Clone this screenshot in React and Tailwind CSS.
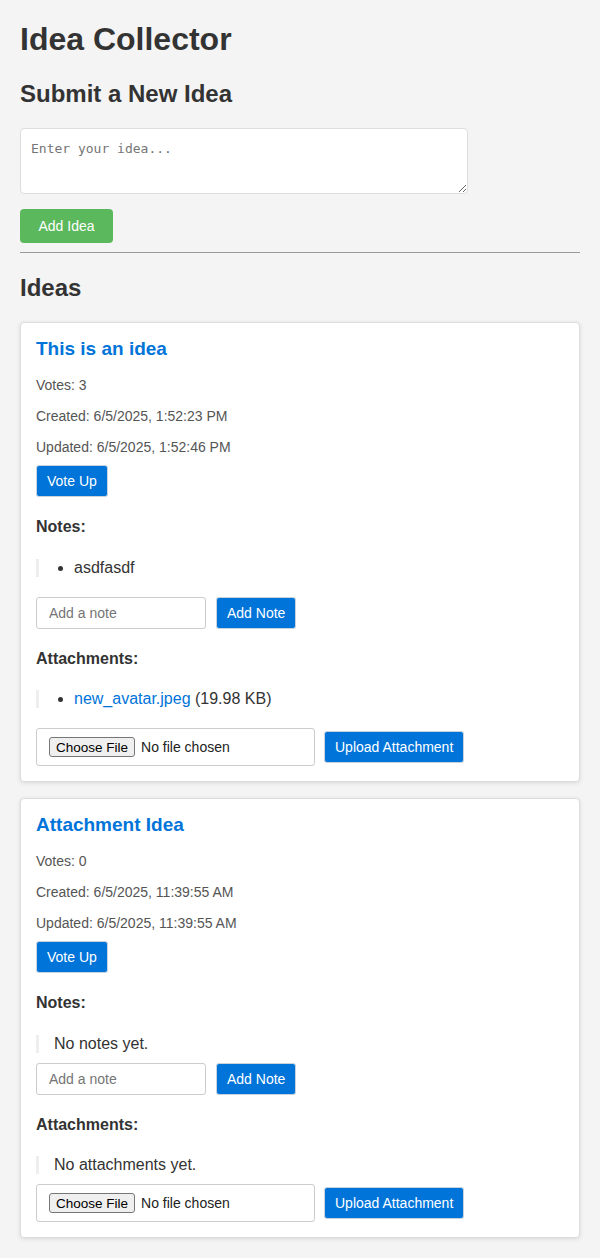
const ideas = [
  {
    title: 'This is an idea',
    votes: 3,
    created: '6/5/2025, 1:52:23 PM',
    updated: '6/5/2025, 1:52:46 PM',
    notes: ['asdfasdf'],
    attachments: [{ name: 'new_avatar.jpeg', size: '19.98 KB' }],
  },
  {
    title: 'Attachment Idea',
    votes: 0,
    created: '6/5/2025, 11:39:55 AM',
    updated: '6/5/2025, 11:39:55 AM',
    notes: [],
    attachments: [],
  },
]

function BlueButton({ children, className = '' }) {
  return (
    <button className={`h-8 shrink-0 rounded-[3px] border border-[#c9d3de] bg-[#0074d9] px-[10px] text-sm text-white ${className}`}>
      {children}
    </button>
  )
}

function IdeaCard({ idea }) {
  return (
    <div className="mb-4 rounded border border-[#ddd] bg-white px-[15px] pb-[15px] pt-[15px] shadow-[0_1px_4px_rgba(0,0,0,0.12)]">
      <h3 className="text-[19px] font-bold leading-[22px] text-[#0074d9]">{idea.title}</h3>
      <p className="mt-[17px] text-sm leading-4 text-[#555]">Votes: {idea.votes}</p>
      <p className="mt-[15px] text-sm leading-4 text-[#555]">Created: {idea.created}</p>
      <p className="mt-[15px] text-sm leading-4 text-[#555]">Updated: {idea.updated}</p>
      <BlueButton className="mt-[10px]">Vote Up</BlueButton>

      {/* Notes */}
      <h4 className="mt-[21px] text-base font-bold leading-[18px] text-[#333]">Notes:</h4>
      <div className="mt-[23px] border-l-[3px] border-[#eee] pl-[15px] text-base leading-[18px] text-[#333]">
        {idea.notes.length ? (
          <ul className="list-disc pl-5">
            {idea.notes.map((n) => (
              <li key={n}>{n}</li>
            ))}
          </ul>
        ) : (
          <p>No notes yet.</p>
        )}
      </div>
      <div className={`flex gap-[10px] ${idea.notes.length ? 'mt-5' : 'mt-[10px]'}`}>
        <input
          placeholder="Add a note"
          className="h-8 w-[170px] rounded-[3px] border border-[#ccc] px-3 text-sm text-[#333] outline-none placeholder:text-[#757575]"
        />
        <BlueButton>Add Note</BlueButton>
      </div>

      {/* Attachments */}
      <h4 className="mt-[21px] text-base font-bold leading-[18px] text-[#333]">Attachments:</h4>
      <div className="mt-[22px] border-l-[3px] border-[#eee] pl-[15px] text-base leading-[18px] text-[#333]">
        {idea.attachments.length ? (
          <ul className="list-disc pl-5">
            {idea.attachments.map((a) => (
              <li key={a.name}>
                <a href="#" className="text-[#0074d9]">{a.name}</a> ({a.size})
              </li>
            ))}
          </ul>
        ) : (
          <p>No attachments yet.</p>
        )}
      </div>
      <div className={`flex items-center gap-[9px] ${idea.attachments.length ? 'mt-5' : 'mt-[10px]'}`}>
        <input
          type="file"
          className="w-[279px] rounded-[3px] border border-[#ccc] px-3 py-2 text-sm leading-5 text-[#222] file:mr-[6px] file:h-5 file:rounded-[3px] file:border file:border-[#767676] file:bg-[#efefef] file:px-[6px] file:text-[13.5px] file:text-black"
        />
        <BlueButton>Upload Attachment</BlueButton>
      </div>
    </div>
  )
}

export default function App() {
  return (
    <div className="min-h-screen bg-[#f4f4f4] px-5 pb-[4px] pt-[21px] font-['Liberation_Sans',Arial,sans-serif] text-[#333]">
      <h1 className="text-[32px] font-bold leading-[37px]">Idea Collector</h1>

      {/* Submit form */}
      <h2 className="mt-[22px] text-2xl font-bold leading-[28px]">Submit a New Idea</h2>
      <textarea
        placeholder="Enter your idea..."
        className="mt-5 block h-[66px] w-[448px] rounded border border-[#ddd] bg-white p-[10px] font-['DejaVu_Sans_Mono',monospace] text-[13px] outline-none placeholder:text-[#757575]"
      />
      <button className="mt-[15px] h-[34px] w-[93px] rounded bg-[#5cb85c] text-sm text-white">Add Idea</button>
      <div className="mt-[9px] h-px bg-[#9a9a9a]" />

      <h2 className="mt-[21px] text-2xl font-bold leading-[28px]">Ideas</h2>
      <div className="mt-5">
        {ideas.map((idea) => (
          <IdeaCard key={idea.title} idea={idea} />
        ))}
      </div>
    </div>
  )
}
